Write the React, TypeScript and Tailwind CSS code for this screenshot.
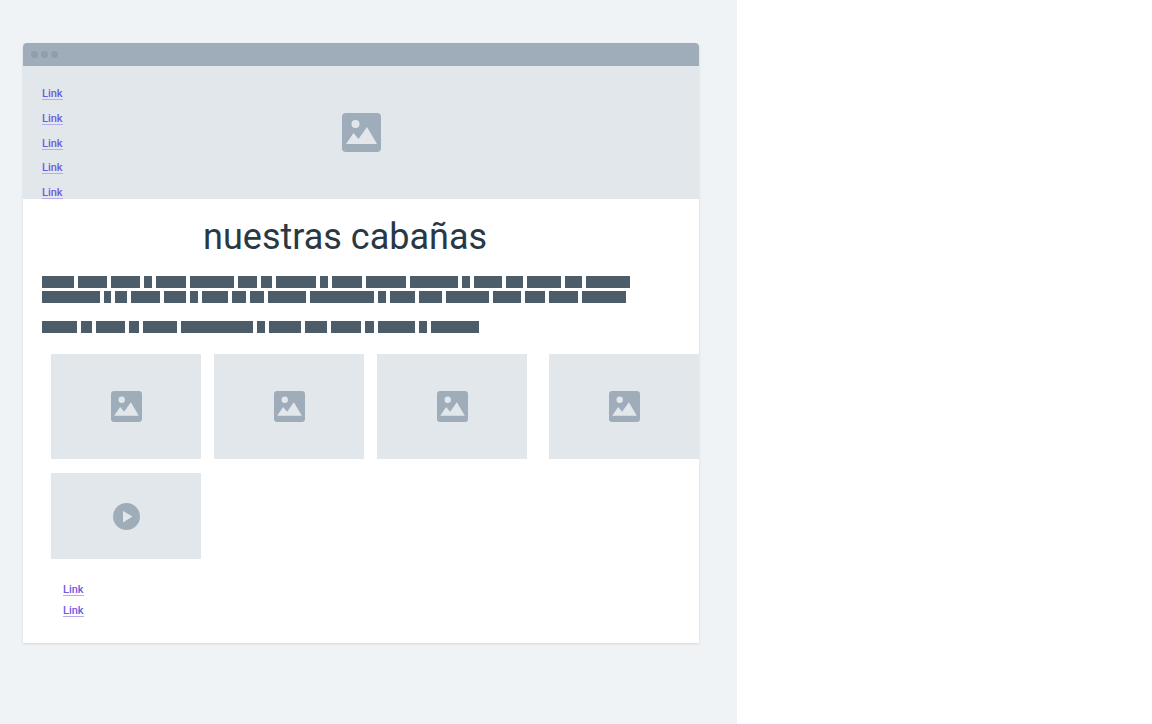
const lines = [
  [32, 29, 29, 8, 30, 44, 19, 11, 40, 8, 30, 40, 48, 8, 28, 17, 34, 17, 44],
  [58, 7, 12, 29, 22, 8, 26, 14, 14, 38, 64, 8, 25, 23, 43, 28, 20, 29, 44],
];
const closingLine = [35, 11, 29, 10, 34, 72, 8, 32, 22, 30, 9, 37, 8, 48];

function ImageIcon({ className }: { className: string }) {
  return (
    <svg viewBox="0 0 39 39" className={className} aria-hidden="true">
      <rect width="39" height="39" rx="4" fill="#9eadb9" />
      <circle cx="13.5" cy="11" r="4" fill="#e2e7eb" />
      <path d="M4 31 L11.500 20 L16.500 26 L25 14 L35 31 Z" fill="#e2e7eb" />
    </svg>
  );
}

function PlayIcon() {
  return (
    <svg viewBox="0 0 27 27" className="size-[27px]" aria-hidden="true">
      <circle cx="13.500" cy="13.500" r="13.500" fill="#9eadb9" />
      <path d="M10 8 L19.500 13.500 L10 19.500 Z" fill="#e2e7eb" />
    </svg>
  );
}

function TextLink() {
  return (
    <a
      href="#"
      className="block h-[14px] border-b border-[#b5abf0] text-[11px] leading-[16px] font-medium text-[#6c5ce0]"
    >
      Link
    </a>
  );
}

function WordBars({ widths }: { widths: number[] }) {
  return (
    <div className="flex gap-1">
      {widths.map((width, i) => (
        <span key={i} className="h-3 bg-[#4c5c69]" style={{ width }} />
      ))}
    </div>
  );
}

function Picture({ className = "" }: { className?: string }) {
  return (
    <div className={`flex h-[105px] flex-1 items-center justify-center bg-[#e2e7eb] ${className}`}>
      <ImageIcon className="size-[31px]" />
    </div>
  );
}

export default function App() {
  return (
    <div className="min-h-screen bg-white font-['Roboto',sans-serif]">
      <div className="min-h-screen w-[64%] bg-[#eff3f6] pt-[43px] pr-[38px] pb-20 pl-[23px]">
        <main className="overflow-hidden rounded-t bg-white pb-[26px] shadow-sm">
          <div className="flex h-[23px] items-center gap-[3px] bg-[#9eadb9] pl-2">
            <span className="size-[7px] rounded-full bg-[#8e9eab]" />
            <span className="size-[7px] rounded-full bg-[#8e9eab]" />
            <span className="size-[7px] rounded-full bg-[#8e9eab]" />
          </div>

          <header className="grid h-[133px] bg-[#e2e7eb]">
            <div className="col-start-1 row-start-1 flex items-center justify-center">
              <ImageIcon className="size-[39px]" />
            </div>
            <nav className="col-start-1 row-start-1 flex flex-col items-start justify-between pt-5 pl-[19px]">
              <TextLink />
              <TextLink />
              <TextLink />
              <TextLink />
              <TextLink />
            </nav>
          </header>

          <h1 className="pt-4 pr-8 text-center text-[36px] leading-[45px] font-normal text-[#293845]">
            nuestras cabañas
          </h1>

          <div className="flex flex-col gap-[3px] pt-4 pl-[19px]" aria-hidden="true">
            {lines.map((widths, i) => (
              <WordBars key={i} widths={widths} />
            ))}
            <div className="pt-[15px]">
              <WordBars widths={closingLine} />
            </div>
          </div>

          <section className="flex gap-[13px] pt-[21px] pl-7">
            <Picture />
            <Picture />
            <Picture />
            <Picture className="ml-[9px]" />
          </section>

          <section className="pt-[14px] pl-7">
            <button
              type="button"
              aria-label="Play"
              className="flex h-[86px] w-[150px] items-center justify-center bg-[#e2e7eb]"
            >
              <PlayIcon />
            </button>
          </section>

          <footer className="flex flex-col items-start gap-[7px] pt-[23px] pl-10">
            <TextLink />
            <TextLink />
          </footer>
        </main>
      </div>
    </div>
  );
}
